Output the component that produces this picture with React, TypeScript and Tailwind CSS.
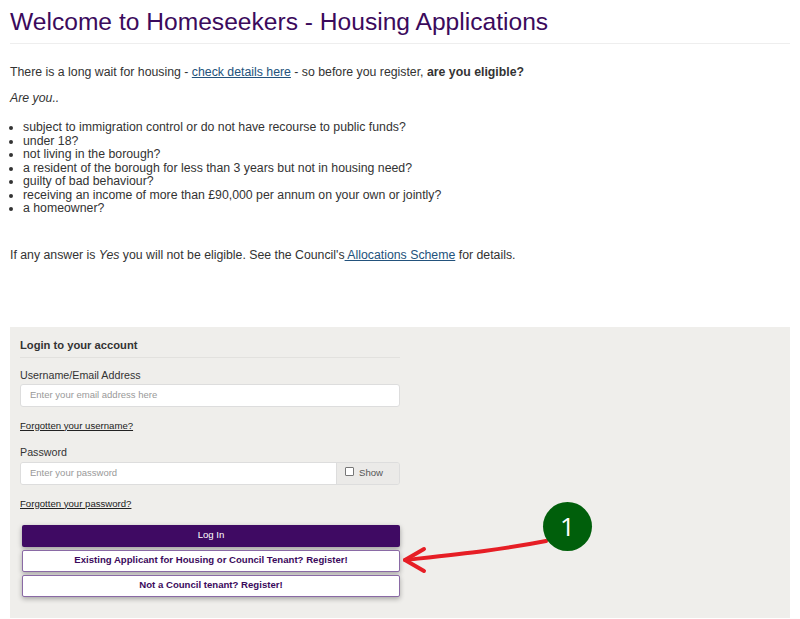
import React from 'react';

const items = [
  'subject to immigration control or do not have recourse to public funds?',
  'under 18?',
  'not living in the borough?',
  'a resident of the borough for less than 3 years but not in housing need?',
  'guilty of bad behaviour?',
  'receiving an income of more than £90,000 per annum on your own or jointly?',
  'a homeowner?',
];

export default function App() {
  return (
    <div className="w-[800px] h-[619px] overflow-hidden bg-white px-[10px] pt-[6px] text-[12.3px] text-[#333] font-['Liberation_Sans',Arial,sans-serif] relative">
      <h1 className="text-[24.6px] leading-[32px] text-[#3b0a5c] pb-[5px] border-b border-[#eeeeee]">
        Welcome to Homeseekers - Housing Applications
      </h1>

      <p className="mt-[20px] leading-[16px]">
        There is a long wait for housing - <a className="text-[#23527c] underline">check details here</a> - so before you register, <b>are you eligible?</b>
      </p>
      <p className="mt-[10px] leading-[16px] italic">Are you..</p>
      <ul className="mt-[15px] pl-[13px] list-disc leading-[13.5px]">
        {items.map((t) => (
          <li key={t}>{t}</li>
        ))}
      </ul>
      <p className="mt-[31px] leading-[16px]">
        If any answer is <i>Yes</i> you will not be eligible. See the Council's<a className="text-[#23527c] underline"> Allocations Scheme</a> for details.
      </p>

      <div className="mt-[64px] bg-[#efeeeb] h-[291px] px-[10px] pt-[10px] w-[780px]">
        <div className="w-[380px]">
          <div className="font-bold text-[11.2px] leading-[16px] pb-[4px] border-b border-[#e2e1de]">Login to your account</div>
          <label className="block mt-[10px] text-[10.7px] leading-[14px]">Username/Email Address</label>
          <div className="mt-[2px] h-[23px] bg-white border border-[#ddd] rounded-[3px] flex items-center px-[9px] text-[9.5px] text-[#999]">
            Enter your email address here
          </div>
          <a className="block mt-[13px] text-[9.6px] leading-[12px] underline text-[#222]">Forgotten your username?</a>
          <label className="block mt-[13px] text-[10.7px] leading-[14px]">Password</label>
          <div className="mt-[3px] h-[23px] flex border border-[#ddd] rounded-[3px] overflow-hidden">
            <div className="flex-1 bg-white flex items-center px-[9px] text-[9.5px] text-[#999]">Enter your password</div>
            <div className="w-[63px] bg-[#ebeae8] border-l border-[#ddd] flex items-start pt-[3px] pl-[8px] gap-[5px] text-[9.6px] text-[#555]">
              <span className="w-[9px] h-[9px] border border-[#777] rounded-[1px] bg-white mt-[1px]" />
              Show
            </div>
          </div>
          <a className="block mt-[13px] text-[9.6px] leading-[12px] underline text-[#222]">Forgotten your password?</a>
          <div className="mt-[15px] ml-[2px] flex flex-col gap-[3px]">
            <button className="h-[22px] bg-[#3f0a63] text-white text-[9.6px] rounded-[2px] shadow-[0_2px_5px_rgba(0,0,0,0.35)]">Log In</button>
            <button className="h-[22px] bg-white text-[#3b0a5c] font-bold text-[9.6px] rounded-[2px] border border-[#8a6aa5] shadow-[0_2px_5px_rgba(0,0,0,0.3)]">Existing Applicant for Housing or Council Tenant? Register!</button>
            <button className="h-[22px] bg-white text-[#3b0a5c] font-bold text-[9.6px] rounded-[2px] border border-[#8a6aa5] shadow-[0_2px_5px_rgba(0,0,0,0.3)]">Not a Council tenant? Register!</button>
          </div>
        </div>
      </div>

      <svg className="absolute left-0 top-0 pointer-events-none" width="800" height="619">
        <path d="M546 541 C 500 550, 460 554, 405 560" stroke="#e61e25" strokeWidth="4" fill="none" strokeLinecap="round" />
        <path d="M424 549 L 405 560 L 424 571" stroke="#e61e25" strokeWidth="4" fill="none" strokeLinecap="round" strokeLinejoin="round" />
      </svg>
      <div className="absolute left-[543px] top-[502px] w-[49px] h-[49px] rounded-full bg-[#005f0b] text-white flex items-center justify-center text-[26px] font-['Open_Sans',sans-serif]">
        1
      </div>
    </div>
  );
}
